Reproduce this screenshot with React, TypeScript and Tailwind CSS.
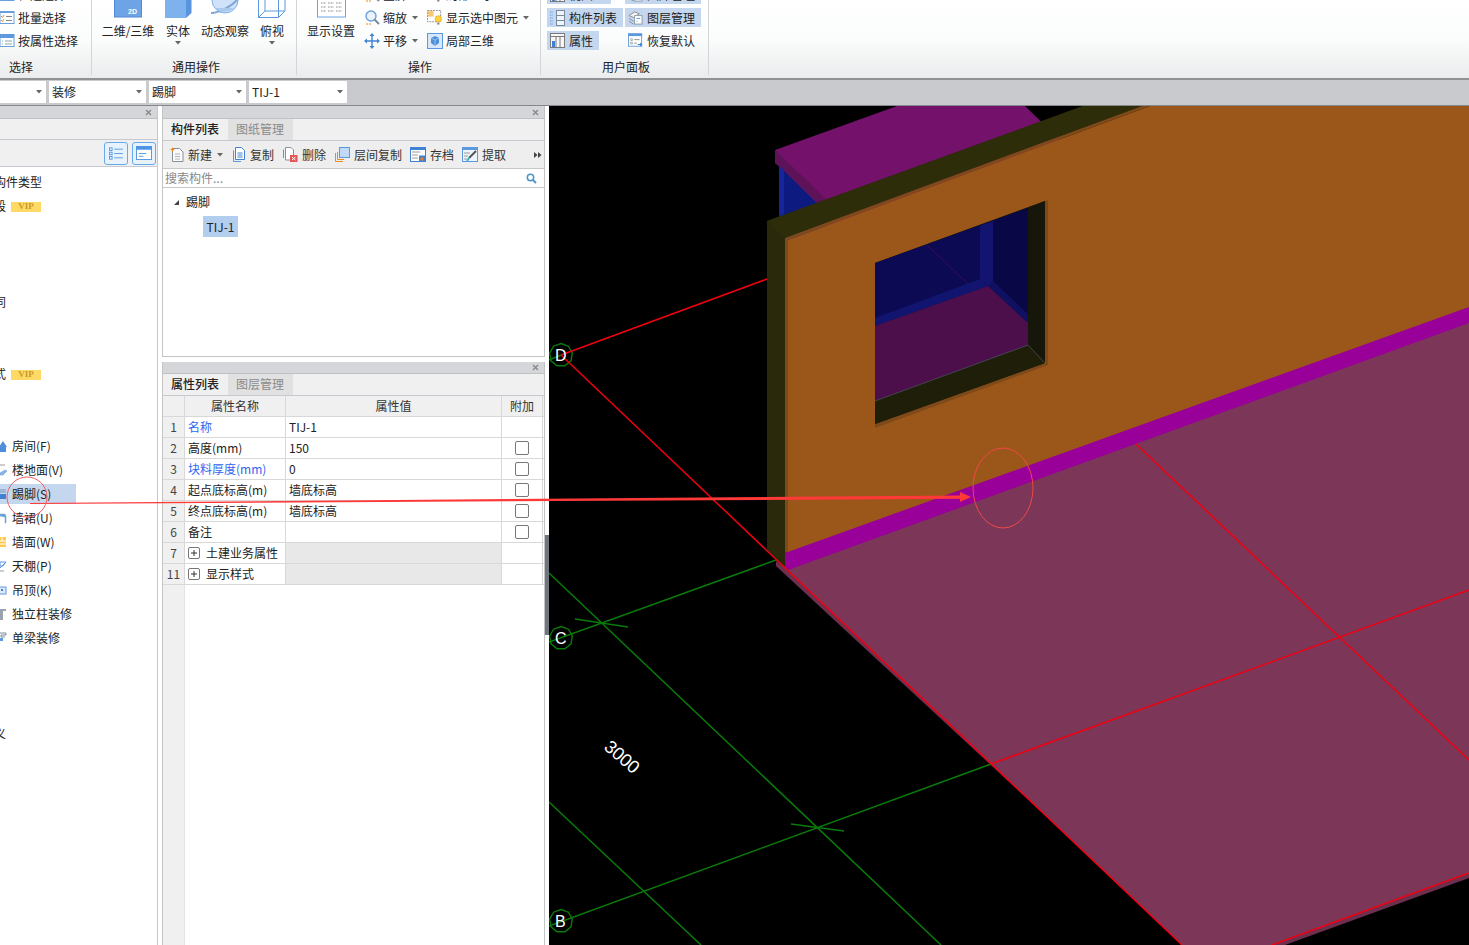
import React from "react";

const Caret = ({ className = "" }: { className?: string }) => (
  <svg width="6" height="4" viewBox="0 0 6 4" className={className}>
    <path d="M0 0H6L3 3.5Z" fill="#666" />
  </svg>
);

/* ---------- ribbon icons ---------- */
const IconBatch = () => (
  <svg width="15" height="15" viewBox="0 0 15 15" className="shrink-0">
    <rect x="0" y="1.5" width="14" height="12" fill="#fff" stroke="#6a9fdd" />
    <rect x="0" y="1" width="14" height="2" fill="#6a9fdd" />
    <path d="M1 6l1.5 1.5L4 5M1 10l1.5 1.5L4 9" stroke="#ee8a1f" fill="none" />
    <path d="M6 6.5h6M6 10.5h6" stroke="#888" />
  </svg>
);
const IconAttrSel = () => (
  <svg width="15" height="15" viewBox="0 0 15 15" className="shrink-0">
    <rect x="0" y="1.5" width="14" height="12" fill="#fff" stroke="#6a9fdd" />
    <rect x="0" y="1" width="14" height="4" fill="#5c98e0" />
    <path d="M2 3h1M5 3h1M5 8h7M5 11h7M2 8h1M2 11h1" stroke="#8aa" />
  </svg>
);
const IconZoom = () => (
  <svg width="16" height="16" viewBox="0 0 16 16" className="shrink-0">
    <circle cx="7" cy="6" r="5" fill="#eaf3fc" stroke="#6aa0d8" strokeWidth="1.4" />
    <path d="M10.5 9.5L15 14" stroke="#7a8a9a" strokeWidth="2" />
    <path d="M2 14h5" stroke="#ee8a1f" strokeDasharray="2 1" />
  </svg>
);
const IconPan = () => (
  <svg width="16" height="16" viewBox="0 0 16 16" className="shrink-0">
    <path d="M8 2v12M2 8h12" stroke="#3f82d4" strokeWidth="1.4" />
    <path d="M8 0l2.5 3h-5zM8 16l-2.5-3h5zM0 8l3-2.5v5zM16 8l-3 2.5v-5z" fill="#3f82d4" />
  </svg>
);
const IconShowSel = () => (
  <svg width="16" height="17" viewBox="0 0 17 17" className="shrink-0">
    <rect x="0.5" y="1" width="14" height="12" fill="#fff" stroke="#8a8a8a" strokeDasharray="2 1" />
    <rect x="1" y="1.5" width="6" height="6" fill="#f8c77a" />
    <circle cx="12" cy="10" r="3.4" fill="#ffd23c" stroke="#d8a010" strokeWidth=".6" />
    <path d="M10.8 14h2.4v2h-2.4z" fill="#888" />
  </svg>
);
const IconLocal3D = () => (
  <svg width="16" height="16" viewBox="0 0 16 16" className="shrink-0">
    <rect x="0.5" y="0.5" width="15" height="15" fill="#d8e8f8" stroke="#5c98e0" />
    <path d="M8 3l4 2v5l-4 3-4-3V5z" fill="#4d8fd8" />
    <path d="M8 7v6M4 5l4 2 4-2" stroke="#bcd6f2" strokeWidth=".7" fill="none" />
  </svg>
);
const IconCompList = () => (
  <svg width="15" height="16" viewBox="0 0 15 16" className="shrink-0">
    <path d="M0 2h3M0 5h3M0 8h3M0 11h3M0 14h3" stroke="#5c98e0" strokeDasharray="1 .6" />
    <rect x="6.5" y="0.5" width="8" height="15" fill="#eef4fb" stroke="#7a8a9a" />
    <path d="M6.5 5.5h8M6.5 10.5h8" stroke="#7a8a9a" />
  </svg>
);
const IconLayer = () => (
  <svg width="15" height="15" viewBox="0 0 16 16" className="shrink-0">
    <path d="M1 6l6-4 5 2-6 4zM1 9l5 3M1 12l5 3" stroke="#8a8a8a" fill="#f4f4f4" />
    <rect x="7" y="6" width="8" height="9" fill="#fff" stroke="#8a9aaa" />
    <path d="M9 9h4M9 12h1" stroke="#4d8fd8" />
  </svg>
);
const IconAttr = () => (
  <svg width="15" height="15" viewBox="0 0 15 15" className="shrink-0">
    <rect x="0.5" y="0.5" width="14" height="14" fill="#f6f6f6" stroke="#7a7a7a" />
    <path d="M0.5 3.5h14M6 3.5v11M10 3.5v11" stroke="#7a7a7a" />
    <rect x="2" y="8" width="3" height="6" fill="#3f82d4" />
  </svg>
);
const IconRestore = () => (
  <svg width="15" height="15" viewBox="0 0 17 16" className="shrink-0">
    <rect x="0.5" y="0.5" width="15" height="14" fill="#fff" stroke="#5c98e0" />
    <rect x="0" y="0" width="16" height="3" fill="#5c98e0" />
    <path d="M3 6h2v2H3zM3 10h2v2H3z" fill="none" stroke="#888" strokeWidth=".7" />
    <path d="M7 7h6M7 11h3" stroke="#888" />
    <path d="M11 12.5h5M14.5 10.5v4" stroke="#2f7fd0" strokeWidth="1.2" />
  </svg>
);

/* ---------- big buttons ---------- */
const Big2D = () => (
  <svg width="28" height="18" viewBox="0 0 28 18">
    <rect x="0.5" y="-4" width="27" height="21" fill="#6ea4e6" stroke="#4f8bd6" />
    <text x="14" y="14" fontSize="7" fontWeight="700" fill="#fff" fontFamily="Liberation Sans">2D</text>
  </svg>
);
const BigSolid = () => (
  <svg width="27" height="18" viewBox="0 0 27 18">
    <path d="M0 0H21V18H0Z" fill="#7eb2ef" />
    <path d="M21 0H26.5V13L21 18Z" fill="#5a94dc" />
  </svg>
);
const BigOrbit = () => (
  <svg width="30" height="16" viewBox="0 0 30 16">
    <circle cx="15" cy="0" r="13" fill="#cfe2f7" stroke="#7fb0e6" />
    <path d="M1 13C8 13 24 6 29 -3" stroke="#7fa8d8" strokeWidth="2" fill="none" />
    <path d="M5 8C9 13 18 13 24 8" fill="#a9c9ee" />
  </svg>
);
const BigTop = () => (
  <svg width="28" height="18" viewBox="0 0 28 18" fill="none" stroke="#5c98e0">
    <path d="M0.5 -1V17.5H20.5L27 11V-1M20.5 -1V17.5M0.5 17.5L7 11H27M7 -1V11" />
  </svg>
);
const BigDisplay = () => (
  <svg width="29" height="18" viewBox="0 0 29 18" fill="none">
    <rect x="0.5" y="-4" width="28" height="21" fill="#fff" stroke="#6ea4e6" />
    <path d="M4 3h5M11 3h6M19 3h6M4 7h5M11 7h6M19 7h6M4 11h5M11 11h6M19 11h6" stroke="#8a8a8a" strokeDasharray="1 .5" />
  </svg>
);

/* ---------- toolbar icons ---------- */
const ToolNew = () => (
  <svg width="14" height="15" viewBox="0 0 14 15" className="shrink-0">
    <path d="M2.5 1.5H9.5L13 5V14.5H2.5Z" fill="#fafafa" stroke="#8a9099" />
    <path d="M5 7h5M5 9.5h5M5 12h5" stroke="#b0b4ba" />
    <path d="M2.5 0l.8 1.7L5 2.5l-1.7.8L2.5 5l-.8-1.7L0 2.5l1.7-.8z" fill="#ee8a1f" />
  </svg>
);
const ToolCopy = () => (
  <svg width="14" height="15" viewBox="0 0 14 15" className="shrink-0">
    <path d="M1.5 3.5V14.5H9" fill="none" stroke="#5c98e0" />
    <path d="M3.5 0.5H9.5L12.5 3.5V12.5H3.5Z" fill="#fff" stroke="#3f82d4" />
    <path d="M5.5 6h5M5.5 8h5M5.5 10h5" stroke="#3f82d4" />
  </svg>
);
const ToolDelete = () => (
  <svg width="15" height="15" viewBox="0 0 15 15" className="shrink-0">
    <path d="M0.5 2.5V11" fill="none" stroke="#8a9099" />
    <path d="M2.5 0.5H8L10.5 3V13H2.5Z" fill="#fff" stroke="#8a9099" />
    <rect x="7" y="8" width="7.5" height="7" fill="#e25555" />
    <path d="M9 10l3.5 3M12.5 10L9 13" stroke="#fff" />
  </svg>
);
const ToolLayerCopy = () => (
  <svg width="15" height="15" viewBox="0 0 15 15" className="shrink-0">
    <path d="M0.5 6V14.5H8" fill="none" stroke="#ee8a1f" />
    <path d="M2.5 5V12.5H9" fill="none" stroke="#ee8a1f" />
    <rect x="4.5" y="0.5" width="10" height="10" fill="#c0d9f7" stroke="#5c98e0" />
  </svg>
);
const ToolSave = () => (
  <svg width="16" height="15" viewBox="0 0 16 15" className="shrink-0">
    <rect x="0.5" y="0.5" width="15" height="14" fill="#fff" stroke="#3f82d4" />
    <rect x="0" y="0" width="16" height="3" fill="#3f82d4" />
    <path d="M2 5h8M2 8h6M2 11h6" stroke="#999" />
    <rect x="9" y="8.5" width="6" height="6" fill="#3f82d4" />
    <rect x="10.5" y="10.5" width="3" height="3" fill="#ee7a1f" />
  </svg>
);
const ToolExtract = () => (
  <svg width="16" height="15" viewBox="0 0 16 15" className="shrink-0">
    <rect x="0.5" y="0.5" width="15" height="14" fill="#eef4fb" stroke="#5c98e0" />
    <rect x="0" y="0" width="16" height="3" fill="#5c98e0" />
    <path d="M2 6h6M2 9h4M2 12h3" stroke="#999" />
    <path d="M14 4L7 11" stroke="#555" strokeWidth="2" />
    <path d="M7 11l-2 3" stroke="#2fb8d8" strokeWidth="2" />
  </svg>
);

/* ---------- small list icons (cut by the left edge) ---------- */
const ListIcon = ({ k }: { k: number }) => {
  const d: React.ReactNode[] = [
    <path key="0" d="M-1 7L3 1L7 7H6V12H0V7Z" fill="#4d8fd8" />,
    <g key="1"><path d="M0 1H5" stroke="#999" /><path d="M0 9L5 6L7 7L3 11H0Z" fill="#8ab4e4" stroke="#5c98e0" strokeWidth=".5" /></g>,
    <g key="2"><rect x="0" y="1" width="6" height="4" fill="#9ab6d4" /><rect x="0" y="6" width="6" height="5" fill="#3f82d4" /></g>,
    <path key="3" d="M0 2H5L6 4V11H5V5L0 4Z" fill="#6aa0d8" stroke="#6aa0d8" strokeWidth=".5" />,
    <g key="4"><rect x="-1" y="1" width="7" height="10" fill="#ffc94d" /><path d="M-1 5H6M-1 8H6M2 1V5" stroke="#fff" /></g>,
    <g key="5"><path d="M0 2H6L3 6H0Z" fill="#fff" stroke="#5c98e0" /><path d="M0 8L6 2" stroke="#5c98e0" /><path d="M0 11H4" stroke="#999" /></g>,
    <g key="6"><rect x="-1" y="3" width="7" height="7" fill="#dfeaf6" stroke="#5c98e0" /><rect x="1" y="5" width="2" height="2" fill="#3f82d4" /></g>,
    <g key="7"><path d="M0 1H6V3H3V12H0Z" fill="#9aa4ae" /></g>,
    <g key="8"><path d="M0 1H6V3H1V5H5" stroke="#7a8a9a" fill="none" /><path d="M0 6H3V9H0Z" fill="#5c98e0" /></g>,
  ];
  return (
    <svg width="7" height="12" viewBox="0 0 7 12" className="shrink-0" overflow="hidden">
      {d[k]}
    </svg>
  );
};

const RibbonRow = ({ icon, text, caret, className = "" }: { icon: React.ReactNode; text?: string; caret?: boolean; className?: string }) => (
  <div className={`flex h-[23px] items-center ${className}`}>
    {icon}
    {text && <span className="ml-[3px] whitespace-nowrap">{text}</span>}
    {caret && <Caret className="ml-[5px]" />}
  </div>
);

const BigButton = ({ icon, text, w, caret }: { icon: React.ReactNode; text: string; w: string; caret?: boolean }) => (
  <div className={`flex shrink-0 flex-col items-center ${w}`}>
    <div className="flex h-[22px] items-start justify-center">{icon}</div>
    <div className="h-[18px] whitespace-nowrap">{text}</div>
    {caret && <Caret className="mt-[1px]" />}
  </div>
);

const Panel = ({ icon, text, active, w }: { icon: React.ReactNode; text: string; active?: boolean; w: string }) => (
  <div className="flex h-[23px] items-center">
    <div className={`flex h-[19px] items-center pl-[3px] ${w} ${active ? "bg-[#c5d7ef]" : ""}`}>
      {icon}
      <span className="ml-[4px] whitespace-nowrap">{text}</span>
    </div>
  </div>
);

const Group = ({ w, label, labelClass, children }: { w: string; label: string; labelClass: string; children: React.ReactNode }) => (
  <div className={`flex h-[75px] shrink-0 flex-col border-r border-[#d3d5d8] ${w}`}>
    <div className="h-[58px] overflow-hidden">{children}</div>
    <div className={`h-[17px] leading-[18px] ${labelClass}`}>{label}</div>
  </div>
);

const Ribbon = () => (
  <div className="flex h-[78px] bg-gradient-to-b from-[#ffffff] via-[#fbfcfc] to-[#eaeced] text-[12px] leading-[18px] text-[#222]">
    <Group w="w-[92px]" label="选择" labelClass="pl-[9px]">
      <div className="-mt-[17px]">
        <RibbonRow icon={<IconBatch />} text="框选选择" />
        <RibbonRow icon={<IconBatch />} text="批量选择" />
        <RibbonRow icon={<IconAttrSel />} text="按属性选择" />
      </div>
    </Group>
    <Group w="w-[205px]" label="通用操作" labelClass="text-center pl-[4px]">
      <div className="flex pl-[8px]">
        <BigButton w="w-[56px]" icon={<Big2D />} text="二维/三维" />
        <BigButton w="w-[44px]" icon={<BigSolid />} text="实体" caret />
        <BigButton w="w-[50px]" icon={<BigOrbit />} text="动态观察" />
        <BigButton w="w-[44px]" icon={<BigTop />} text="俯视" caret />
      </div>
    </Group>
    <Group w="w-[244px]" label="操作" labelClass="text-center pl-[3px]">
      <div className="flex pl-[8px]">
        <BigButton w="w-[52px]" icon={<BigDisplay />} text="显示设置" />
        <div className="-mt-[17px] ml-[7px] w-[63px] shrink-0">
          <RibbonRow icon={<IconZoom />} text="全屏" />
          <RibbonRow icon={<IconZoom />} text="缩放" caret />
          <RibbonRow icon={<IconPan />} text="平移" caret />
        </div>
        <div className="-mt-[17px] shrink-0">
          <RibbonRow icon={<IconShowSel />} text="局部显示" />
          <RibbonRow icon={<IconShowSel />} text="显示选中图元" caret />
          <RibbonRow icon={<IconLocal3D />} text="局部三维" />
        </div>
      </div>
    </Group>
    <Group w="w-[168px]" label="用户面板" labelClass="text-center pl-[3px]">
      <div className="-mt-[17px] flex pl-[6px]">
        <div className="w-[78px] shrink-0">
          <Panel w="w-[64px]" icon={<IconAttr />} text="视图" active />
          <Panel w="w-[76px]" icon={<IconCompList />} text="构件列表" active />
          <Panel w="w-[52px]" icon={<IconAttr />} text="属性" active />
        </div>
        <div className="shrink-0">
          <Panel w="w-[76px]" icon={<IconLayer />} text="图库管理" active />
          <Panel w="w-[76px]" icon={<IconLayer />} text="图层管理" active />
          <Panel w="w-[76px]" icon={<IconRestore />} text="恢复默认" />
        </div>
      </div>
    </Group>
  </div>
);

const Combo = ({ text, w }: { text?: string; w: string }) => (
  <div className={`flex h-[22px] items-center justify-between bg-white pl-[3px] pr-[4px] ${w}`}>
    <span>{text}</span>
    <Caret />
  </div>
);

const ComboBar = () => (
  <div className="flex h-[28px] gap-[3px] border-t-2 border-b border-t-[#909294] border-b-[#85888b] bg-[#c8cacd] pt-[1px] text-[12px] leading-[18px] text-[#222]">
    <Combo w="w-[46px]" />
    <Combo w="w-[97px]" text="装修" />
    <Combo w="w-[97px]" text="踢脚" />
    <Combo w="w-[98px]" text="TIJ-1" />
  </div>
);

const PanelHead = ({ h }: { h: string }) => (
  <div className={`flex items-center justify-end border-b border-[#bfc1c5] bg-[#d5d6da] pr-[5px] text-[#8a8a8a] ${h}`}>
    <svg width="7" height="7" viewBox="0 0 7 7"><path d="M1 1l5 5M6 1L1 6" stroke="#888" strokeWidth="1.4" /></svg>
  </div>
);

const leftRows: { t?: string; vip?: boolean; icon?: number; sel?: boolean; cut?: boolean }[] = [
  { t: "构件类型", cut: true },
  { t: "段", vip: true, cut: true },
  {},
  {},
  {},
  { t: "同", cut: true },
  {},
  {},
  { t: "式", vip: true, cut: true },
  {},
  {},
  { t: "房间(F)", icon: 0 },
  { t: "楼地面(V)", icon: 1 },
  { t: "踢脚(S)", icon: 2, sel: true },
  { t: "墙裙(U)", icon: 3 },
  { t: "墙面(W)", icon: 4 },
  { t: "天棚(P)", icon: 5 },
  { t: "吊顶(K)", icon: 6 },
  { t: "独立柱装修", icon: 7 },
  { t: "单梁装修", icon: 8 },
  {},
  {},
  {},
  { t: "义", cut: true },
];

const LeftPanel = () => (
  <div className="flex w-[158px] shrink-0 flex-col border-r border-[#c8c8c8] bg-white text-[12px] leading-[18px] text-[#222]">
    <PanelHead h="h-[13px]" />
    <div className="h-[21px] border-b border-[#c8c8d0] bg-[#f0f0f0]" />
    <div className="flex h-[27px] items-center justify-end gap-[4px] border-b border-[#c8c8d0] bg-[#f0f0f0] pr-[1px]">
      <div className="flex h-[23px] w-[24px] items-center justify-center rounded-[3px] border border-[#66aaee] bg-[#e8f2fc]">
        <svg width="14" height="13" viewBox="0 0 16 15" fill="none" stroke="#4d94e4">
          <rect x="0.5" y="1" width="3" height="3" /><rect x="0.5" y="6" width="3" height="3" /><rect x="0.5" y="11" width="3" height="3" />
          <path d="M6 2.5h10M6 7.5h10M6 12.5h10" />
        </svg>
      </div>
      <div className="flex h-[23px] w-[24px] items-center justify-center rounded-[3px] border border-[#66aaee] bg-[#e8f2fc]">
        <svg width="16" height="14" viewBox="0 0 17 15">
          <rect x="0.5" y="0.5" width="16" height="14" fill="#fff" stroke="#4d94e4" />
          <rect x="0" y="0" width="17" height="4" fill="#4d94e4" />
          <path d="M3 8h8M3 11h5" stroke="#4d94e4" />
        </svg>
      </div>
    </div>
    <div className="overflow-hidden pt-[3px]">
      {leftRows.map((r, i) => (
        <div key={i} className="flex h-[24px] items-center">
          {r.cut && (
            <div className="flex -ml-[6px] items-center">
              <span>{r.t}</span>
              {r.vip && (
                <span className="ml-[5px] mt-[1px] flex h-[10px] w-[30px] items-center justify-center bg-[#ffd966] text-[9px] font-bold leading-none text-[#c99a22] [font-family:'Liberation_Serif',serif]">
                  VIP
                </span>
              )}
            </div>
          )}
          {!r.cut && r.t && (
            <div className={`flex h-[20px] w-[76px] items-center ${r.sel ? "bg-[#c5d7ef]" : ""}`}>
              <ListIcon k={r.icon ?? 0} />
              <span className="ml-[5px] whitespace-nowrap">{r.t}</span>
            </div>
          )}
        </div>
      ))}
    </div>
  </div>
);

const Tabs = ({ a, b }: { a: string; b: string }) => (
  <div className="flex h-[22px] border-b border-[#c8c8d0] bg-[#f0f0f0]">
    <div className="ml-[1px] w-[64px] pr-[2px] text-center font-medium leading-[20px] text-[#222]">{a}</div>
    <div className="w-[65px] bg-[#e1e1e1] pr-[1px] text-center leading-[20px] text-[#8a8a8a]">{b}</div>
  </div>
);

const Tool = ({ icon, text, w, caret }: { icon: React.ReactNode; text: string; w: string; caret?: boolean }) => (
  <div className={`flex shrink-0 items-center ${w}`}>
    {icon}
    <span className="ml-[4px] whitespace-nowrap">{text}</span>
    {caret && <Caret className="ml-[5px]" />}
  </div>
);

const TopMid = () => (
  <div className="flex h-[251px] flex-col border border-t-0 border-[#c4c4c4] bg-white text-[12px] leading-[18px] text-[#222]">
    <PanelHead h="h-[13px]" />
    <Tabs a="构件列表" b="图纸管理" />
    <div className="flex h-[28px] items-center border-b border-[#c8c8c8] bg-[#eeeeee] pl-[7px] text-[#333]">
      <Tool w="w-[62px]" icon={<ToolNew />} text="新建" caret />
      <Tool w="w-[51px]" icon={<ToolCopy />} text="复制" />
      <Tool w="w-[52px]" icon={<ToolDelete />} text="删除" />
      <Tool w="w-[75px]" icon={<ToolLayerCopy />} text="层间复制" />
      <Tool w="w-[52px]" icon={<ToolSave />} text="存档" />
      <Tool w="w-[75px]" icon={<ToolExtract />} text="提取" />
      <svg width="8" height="6" viewBox="0 0 8 6" className="-ml-[3px]"><path d="M0 0l3.5 3L0 6zM4 0l3.5 3L4 6z" fill="#444" /></svg>
    </div>
    <div className="flex h-[19px] items-center justify-between border-b border-[#c8c8c8] pl-[2px] pr-[7px] text-[#888]">
      <span>搜索构件...</span>
      <svg width="11" height="11" viewBox="0 0 11 11" fill="none">
        <circle cx="4.5" cy="4.5" r="3.2" stroke="#4d94c8" strokeWidth="1.5" />
        <path d="M7 7l3 3" stroke="#4d94c8" strokeWidth="1.8" />
      </svg>
    </div>
    <div className="flex h-[28px] items-center pl-[10px]">
      <svg width="7" height="7" viewBox="0 0 7 7"><path d="M6 1V6H1Z" fill="#444" /></svg>
      <span className="ml-[6px]">踢脚</span>
    </div>
    <div className="pl-[40px]">
      <div className="flex h-[21px] w-[35px] items-center justify-center bg-[#b3cdee]">TIJ-1</div>
    </div>
  </div>
);

const propRows: { n: string; name: string; val?: string; blue?: boolean; check?: boolean; plus?: boolean }[] = [
  { n: "1", name: "名称", val: "TIJ-1", blue: true },
  { n: "2", name: "高度(mm)", val: "150", check: true },
  { n: "3", name: "块料厚度(mm)", val: "0", blue: true, check: true },
  { n: "4", name: "起点底标高(m)", val: "墙底标高", check: true },
  { n: "5", name: "终点底标高(m)", val: "墙底标高", check: true },
  { n: "6", name: "备注", check: true },
  { n: "7", name: "土建业务属性", plus: true },
  { n: "11", name: "显示样式", plus: true },
];

const BottomMid = () => (
  <div className="mt-[5px] flex h-[583px] flex-col border-x border-[#c4c4c4] bg-white text-[12px] leading-[18px] text-[#222]">
    <PanelHead h="h-[12px]" />
    <Tabs a="属性列表" b="图层管理" />
    <div className="flex h-[21px] border-b border-[#d8d8d8] bg-[#f0f0f0] text-[#333]">
      <div className="w-[22px] shrink-0 border-r border-[#d8d8d8]" />
      <div className="flex w-[101px] shrink-0 items-center justify-center border-r border-[#d8d8d8]">属性名称</div>
      <div className="flex w-[216px] shrink-0 items-center justify-center border-r border-[#d8d8d8]">属性值</div>
      <div className="flex w-[41px] shrink-0 items-center justify-center border-r border-[#d8d8d8]">附加</div>
    </div>
    {propRows.map((r) => (
      <div key={r.n} className="flex h-[21px] border-b border-[#d8d8d8]">
        <div className="flex w-[22px] shrink-0 items-center justify-center border-r border-[#d8d8d8] bg-[#f0f0f0] text-[#444]">{r.n}</div>
        <div className={`flex w-[101px] shrink-0 items-center whitespace-nowrap border-r border-[#d8d8d8] pl-[3px] ${r.blue ? "text-[#2f66f0]" : ""}`}>
          {r.plus && (
            <span className="mr-[6px] flex h-[12px] w-[12px] items-center justify-center rounded-[2px] border border-[#777] text-[#333]">
              <svg width="6" height="6" viewBox="0 0 6 6"><path d="M0 3h6M3 0v6" stroke="#333" /></svg>
            </span>
          )}
          {r.name}
        </div>
        <div className={`flex w-[216px] shrink-0 items-center border-r border-[#d8d8d8] pl-[3px] ${r.plus ? "bg-[#e8e8e8]" : ""}`}>{r.val}</div>
        <div className="flex w-[41px] shrink-0 items-center justify-center border-r border-[#d8d8d8]">
          {r.check && <span className="h-[14px] w-[14px] rounded-[2px] border border-[#777] bg-white" />}
        </div>
      </div>
    ))}
    <div className="flex-1 border-0">
      <div className="h-full w-[22px] border-r border-[#e4e4e4] bg-[#f0f0f0]" />
    </div>
  </div>
);

const Octagon = ({ cx, cy }: { cx: number; cy: number }) => {
  const pts = Array.from({ length: 9 }, (_, i) => {
    const a = (i * 2 * Math.PI) / 9 - Math.PI / 2;
    return `${(cx + 11.5 * Math.cos(a)).toFixed(1)},${(cy + 11.5 * Math.sin(a)).toFixed(1)}`;
  }).join(" ");
  return <polygon points={pts} fill="none" stroke="#0a7a0a" strokeWidth="1.4" />;
};

const Scene = () => (
  <svg viewBox="549 106 920 839" className="block h-full w-full bg-black">
    {/* object behind the wall */}
    <polygon points="775,150 897,106 1025,106 1060,140 825,250" fill="#73116b" />
    <polygon points="775,150 775,163 818,203 826,199" fill="#5e1358" />
    <polygon points="779,166 817,203 830,240 779,240" fill="#0d1a80" />
    <polygon points="779,166 784,170 784,240 779,240" fill="#16259a" />

    {/* floor */}
    <polygon points="776,561 790,572 1469,323 1469,878 1285,945 1185,945 776,566" fill="#6d2f4e" />
    <polygon points="776,560 790,565 1469,318 1469,873 1272,945 1182,945" fill="#7c3658" />

    {/* wall */}
    <polygon points="767,221 1083,106 1142,106 785,238 785,553 785,567 767,551" fill="#2a290b" />
    <polygon points="767,221 1083,106 1142,106 785,238" fill="#2e2d0a" />
    <polygon points="785,238 1142,106 1150,106 788,240 788,552 785,553" fill="#7f4a1a" />
    <polygon points="788,240 1150,106 1469,106 1469,310 788,555" fill="#9b561a" />

    {/* window */}
    <polygon points="875,263 1048,200 1048,365 875,428" fill="#7f4a1a" />
    <polygon points="875,263 1045,201 1045,363 875,424" fill="#1b1b08" />
    <polygon points="1028,208 1045,201 1045,363 1028,345" fill="#16160a" />
    <polygon points="875,401 1028,345 1045,363 875,424" fill="#1f1f09" />
    <polygon points="875,263 1028,208 1028,345 875,401" fill="#0b0a52" />
    <polygon points="993,221 1028,208 1028,323 993,290" fill="#090745" />
    <polygon points="980,226 993,221 993,290 988,286 980,279" fill="#121470" />
    <polygon points="875,318 980,279 988,286 875,326" fill="#111570" />
    <polygon points="988,286 993,281 1028,314 1028,323" fill="#0f1060" />
    <polygon points="875,326 988,286 1028,323 1028,345 875,401" fill="#4c0f4b" />
    <line x1="927" y1="245" x2="968" y2="284" stroke="#3b0d55" />
    <line x1="875" y1="401" x2="1028" y2="345" stroke="#4a5a5a" strokeWidth=".7" />
    <line x1="1028" y1="345" x2="1045" y2="363" stroke="#4a5a5a" strokeWidth=".7" />

    {/* skirting */}
    <polygon points="785,553 1469,307 1469,323 788,570 785,567" fill="#990099" />

    {/* green axis */}
    <g stroke="#0a7a0a" strokeWidth="1.5" fill="none">
      <line x1="549" y1="642" x2="776" y2="560" />
      <line x1="549" y1="926" x2="991" y2="764" />
      <line x1="549" y1="573" x2="941" y2="945" />
      <line x1="549" y1="802" x2="701" y2="945" />
      <line x1="575" y1="619" x2="628" y2="627" />
      <line x1="791" y1="824" x2="844" y2="831" />
      <line x1="549" y1="360" x2="561" y2="355" />
    </g>
    <Octagon cx={561} cy={355} />
    <Octagon cx={561} cy={638} />
    <Octagon cx={561} cy={921} />

    {/* red axis */}
    <g stroke="#f00010" strokeWidth="1.5" fill="none">
      <line x1="561" y1="355" x2="767" y2="279" />
      <line x1="561" y1="355" x2="1182" y2="945" />
      <line x1="1136" y1="444" x2="1469" y2="760" />
      <line x1="991" y1="764" x2="1469" y2="590" />
      <line x1="1272" y1="945" x2="1469" y2="873" />
    </g>

    <g fill="#fff" fontFamily="Liberation Sans" fontSize="16">
      <text x="555" y="361">D</text>
      <text x="555" y="644">C</text>
      <text x="555" y="927">B</text>
      <text x="622" y="763" fontSize="18" textAnchor="middle" transform="rotate(41 622 757)">3000</text>
    </g>
  </svg>
);

export default function App() {
  return (
    <div className="relative h-[945px] w-[1469px] overflow-hidden bg-white [font-family:'Noto_Sans_CJK_SC',sans-serif]">
      <Ribbon />
      <ComboBar />
      <div className="flex h-[839px]">
        <LeftPanel />
        <div className="ml-[4px] flex w-[383px] shrink-0 flex-col">
          <TopMid />
          <BottomMid />
        </div>
        <div className="relative w-[4px] shrink-0">
          <div className="mt-[429px] h-[100px] w-[4px] bg-[#6e7780]" />
        </div>
        <div className="min-w-0 flex-1">
          <Scene />
        </div>
      </div>
      {/* hand-drawn annotation over the page */}
      <svg viewBox="0 0 1469 945" className="pointer-events-none absolute inset-0 h-[945px] w-[1469px]">
        <polygon points="30,503 960,495.4 960,498.8 30,504" fill="#ff3838" />
        <polygon points="960,492 971,497 960,502" fill="#ff3838" />
        <ellipse cx="1003" cy="488" rx="30" ry="40" fill="none" stroke="#f04848" strokeWidth="1" />
        <ellipse cx="27" cy="497" rx="20" ry="20" fill="none" stroke="#f06060" strokeWidth="1" />
      </svg>
    </div>
  );
}
